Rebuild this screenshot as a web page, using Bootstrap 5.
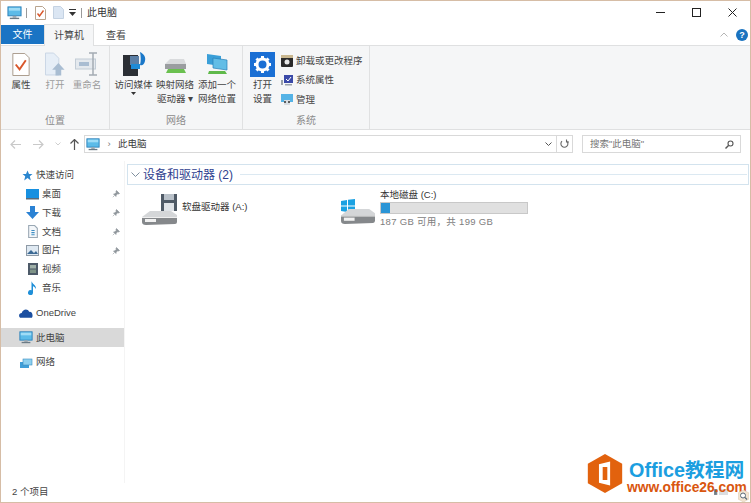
<!DOCTYPE html>
<html lang="zh-CN">
<head>
    <meta charset="UTF-8">
    <meta name="viewport" content="width=device-width, initial-scale=1.0">
    <link href="https://cdn.jsdelivr.net/npm/bootstrap@5.3.3/dist/css/bootstrap.min.css" rel="stylesheet">
    <script src="https://cdn.jsdelivr.net/npm/bootstrap@5.3.3/dist/js/bootstrap.bundle.min.js"></script>
    <title>此电脑</title>
    <style>
        html, body { height: 100%; margin: 0; overflow: hidden; }
        body { font-family: "Liberation Sans", "Noto Sans CJK SC", sans-serif; font-size: 10px; color: #3c3c3c; background: #fff; }
        svg { display: block; flex: none; }

        .win-frame { width: 751px; height: 503px; border: 1px solid #d6bda6; position: relative; background: #fff; }

        /* title bar */
        .title-row { height: 23px; padding-left: 6px; }
        .title-sep { width: 1px; height: 10px; background: #9a9a9a; }
        .sep-a { margin: 0 8px 0 4px; }
        .sep-b { margin: 0 5px 0 5px; }
        .gap-page { margin-left: 7px; }
        .gap-down { margin-left: 5px; }
        .title-text { font-size: 10px; color: #333; }
        .win-btn { width: 36px; justify-content: center; }

        /* tabs */
        .tab-row { height: 21px; }
        .tab-file { width: 43px; height: 19px; background: #1a74c4; color: #fff; font-size: 10px; margin-top: 1px; }
        .tab-item { width: 50px; height: 22px; font-size: 10px; color: #444; margin-bottom: -1px; }
        .tab-view { width: 44px; }
        .tab-on { background: #f5f6f7; border: 1px solid #dfe0e1; border-bottom: 0; position: relative; z-index: 1; }
        .help-dot { width: 12px; height: 12px; border-radius: 50%; background: #1a73c0; color: #fff; font-size: 9px; font-weight: 700; line-height: 12px; text-align: center; margin: 0 2px 0 8px; }

        /* ribbon */
        .ribbon-bar { height: 85px; background: #f5f6f7; border-top: 1px solid #dfe0e1; border-bottom: 1px solid #dfe0e1; }
        .rb-group { border-right: 1px solid #e0e1e2; height: 83px; }
        .grp-place { width: 109px; }
        .grp-net { width: 133px; }
        .grp-sys { width: 127px; }
        .rb-tools { height: 67px; padding-top: 4px; }
        .tools-net { padding-left: 3px; }
        .tools-sys { padding-left: 7px; }
        .rb-label { height: 15px; font-size: 10px; color: #8b8b8b; text-align: center; }
        .rb-ico { height: 28px; display: flex; align-items: center; justify-content: center; }
        .rb-btn { font-size: 9.5px; line-height: 14px; text-align: center; color: #444; width: 42px; }
        .w-prop { width: 40px; }
        .w-open { width: 28px; }
        .w-name { width: 36px; }
        .w-media { width: 41px; }
        .w-set { width: 25px; }
        .rb-dim { color: #9c9c9c; }
        .rb-list { margin-left: 6px; padding-top: 1px; }
        .rb-small { font-size: 9.5px; color: #444; height: 19.5px; gap: 3px; white-space: nowrap; }

        /* address bar */
        .addr-row { height: 31px; padding: 0 8px 3px 9px; }
        .gap-fwd { margin-left: 12px; }
        .gap-hist { margin-left: 11px; }
        .gap-up { margin-left: 9px; }
        .addr-box { width: 473px; height: 18px; border: 1px solid #d9d9d9; font-size: 9.5px; margin-left: 5px; padding-left: 1px; }
        .addr-chev { width: 18px; text-align: center; color: #777; }
        .addr-refresh { width: 16px; height: 18px; border: 1px solid #d9d9d9; border-left: 0; }
        .search-box { width: 159px; height: 18px; border: 1px solid #d9d9d9; color: #777; font-size: 9.5px; margin-left: 9px; padding: 0 6px 0 7px; }

        /* side tree */
        .side-pane { width: 123px; padding-top: 5px; }
        .tree-row { height: 18.8px; font-size: 9.5px; color: #444; white-space: nowrap; gap: 3px; }
        .tree-sub { padding-left: 25px; }
        .tree-top { padding-left: 18px; }
        .tree-gap { margin-top: 6px; }
        .tree-on { background: #d9d9d9; }
        .tree-slot { width: 13px; display: flex; justify-content: center; flex: none; }
        .pin-slot { margin-left: auto; margin-right: 4px; }

        /* content */
        .content-pane { padding: 3px 0 0 2px; border-left: 1px solid #f4f4f4; }
        .group-head { height: 21px; width: 622px; border: 1px solid #d3e3ee; gap: 3px; padding-left: 3px; color: #2f3f8f; font-size: 12px; }
        .group-line { height: 1px; background: #dce9f2; flex: 1; margin: 0 1px 0 4px; }
        .drive-list { padding-top: 3px; }
        .drive-a { width: 214px; padding: 6px 0 0 15px; gap: 5px; }
        .drive-c { gap: 5px; }
        .drive-ico-a { width: 35px; height: 31px; position: relative; }
        .drive-ico-c { width: 34px; height: 25px; margin-top: 11px; position: relative; }
        .drive-a-label { margin-top: 6px; }
        .drive-name { font-size: 9.5px; line-height: 13px; color: #333; white-space: nowrap; }
        .drive-bar { width: 148px; height: 12px; background: #e0e0e0; border: 1px solid #c8c8c8; margin: 1px 0; }
        .drive-used { height: 100%; background: #2b95d6; }
        .drive-free { font-size: 9.5px; line-height: 13px; color: #7d7d7d; letter-spacing: .3px; white-space: nowrap; }

        .status-row { height: 19px; padding: 0 22px 1px 11px; font-size: 9.5px; color: #444; gap: 4px; }

        /* watermark over the window corner */
        .wm-logo { position: absolute; left: 586px; top: 453px; }
        .wm-title { position: absolute; left: 628px; top: 456px; font: 700 19.8px/26px "Liberation Sans", "Noto Sans CJK SC", sans-serif; color: #1b9ee0; white-space: nowrap; }
        .wm-url { position: absolute; left: 626px; top: 478px; font: 700 13.8px/18px "Liberation Sans", sans-serif; color: #d9560f; white-space: nowrap; }
        .wm-zoom { position: absolute; left: 737px; top: 489px; }
    </style>
</head>
<body>

<svg width="0" height="0" class="position-absolute">
    <symbol id="ic-pc" viewBox="0 0 16 14">
        <rect x="1" y="0.5" width="14" height="9.5" fill="#5cbbe8" stroke="#2a7fb8"/>
        <rect x="2" y="1.5" width="12" height="3" fill="#9fdcf6"/>
        <rect x="6" y="10" width="4" height="2" fill="#9aa7b0"/>
        <rect x="3" y="12" width="10" height="1.5" fill="#6b7a85"/>
    </symbol>
    <symbol id="ic-pin" viewBox="0 0 8 8">
        <path d="M4.5 .5 7.5 3.500 6.500 4 5.500 3.800 4.200 5.300 4 6.500 1.500 4 2.800 3.800 4.300 2.500 4 1.500Z M2.500 5.500 .8 7.200" fill="#8e959b" stroke="#8e959b" stroke-width=".6"/>
    </symbol>
    <symbol id="ic-drive" viewBox="0 0 35 15" preserveAspectRatio="none">
        <path d="M0 7 8 1H29L35 5V7Z" fill="#d4d6d8"/>
        <path d="M0 7H35V12Q35 14 33 14L4 15Q0 15 0 12Z" fill="#85888b"/>
        <path d="M0 7H35V8H0Z" fill="#eeeeee"/>
        <rect x="3" y="9" width="11" height="3" fill="#f1f1f1"/>
    </symbol>
</svg>

<div class="win-frame d-flex flex-column">

    <div class="title-row d-flex align-items-center">
        <svg width="15" height="14"><use href="#ic-pc"/></svg>
        <span class="title-sep sep-a"></span>
        <svg width="11" height="14" viewBox="0 0 11 14"><path d="M.5.5H7.500L10.500 3.500V13.500H.5Z" fill="#fff" stroke="#b9a48e"/><path d="M2.500 7.500 4.500 10 8.500 4.500" fill="none" stroke="#d9572b" stroke-width="1.400"/></svg>
        <svg class="gap-page" width="11" height="13" viewBox="0 0 11 13"><path d="M.5.5H7.500L10.500 3.500V12.500H.5Z" fill="#dbe6f3" stroke="#c4d2e2"/></svg>
        <svg class="gap-down" width="7" height="7" viewBox="0 0 7 7"><path d="M0 0H7V1H0ZM0 3H7L3.500 7Z" fill="#333"/></svg>
        <span class="title-sep sep-b"></span>
        <span class="title-text">此电脑</span>
        <div class="ms-auto d-flex h-100 align-items-center">
            <div class="win-btn d-flex"><svg width="9" height="9" viewBox="0 0 9 9"><path d="M0 4.500H9" stroke="#222"/></svg></div>
            <div class="win-btn d-flex"><svg width="9" height="9" viewBox="0 0 9 9"><rect x=".5" y=".5" width="8" height="8" fill="none" stroke="#222"/></svg></div>
            <div class="win-btn d-flex"><svg width="9" height="9" viewBox="0 0 9 9"><path d="M.5.500 8.500 8.500M8.500.500 .5 8.500" stroke="#222"/></svg></div>
        </div>
    </div>

    <div class="tab-row d-flex align-items-start">
        <div class="tab-file d-flex align-items-center justify-content-center">文件</div>
        <div class="tab-item tab-on d-flex align-items-center justify-content-center">计算机</div>
        <div class="tab-item tab-view d-flex align-items-center justify-content-center">查看</div>
        <div class="ms-auto d-flex align-items-center h-100">
            <svg width="8" height="5" viewBox="0 0 8 5"><path d="M.5 4.500 4 1 7.500 4.500" fill="none" stroke="#b5b5b5"/></svg>
            <div class="help-dot">?</div>
        </div>
    </div>

    <div class="ribbon-bar d-flex">
        <!-- 位置 -->
        <div class="rb-group grp-place d-flex flex-column">
            <div class="rb-tools d-flex">
                <div class="rb-btn w-prop">
                    <div class="rb-ico"><svg width="18" height="23" viewBox="0 0 18 24"><path d="M.5.5H13L17.500 5V23.500H.5Z" fill="#fff" stroke="#a89a8a"/><path d="M3.500 12 7.500 17 14 7.500" fill="none" stroke="#d9572b" stroke-width="2"/></svg></div>
                    属性
                </div>
                <div class="rb-btn rb-dim w-open">
                    <div class="rb-ico"><svg width="21" height="24" viewBox="0 0 22 24"><path d="M.5.5H9L14.500 6V23.500H.5Z" fill="#e6eef7" stroke="#c8d5e4"/><path d="M14 11 20.500 18H17V24H11V18H7.500Z" fill="#a9bdd2"/></svg></div>
                    打开
                </div>
                <div class="rb-btn rb-dim w-name">
                    <div class="rb-ico"><svg width="24" height="24" viewBox="0 0 24 24"><rect x=".5" y="7" width="20" height="10" fill="#e4e9ee" stroke="#c2ccd6"/><rect x="4" y="10" width="10" height="4" fill="#a9bdd2"/><path d="M14 1H22M14 23H22M18 1V23" stroke="#a4acb4" stroke-width="1.500" fill="none"/></svg></div>
                    重命名
                </div>
            </div>
            <div class="rb-label">位置</div>
        </div>

        <!-- 网络 -->
        <div class="rb-group grp-net d-flex flex-column">
            <div class="rb-tools tools-net d-flex">
                <div class="rb-btn w-media">
                    <div class="rb-ico"><svg width="26" height="26" viewBox="0 0 26 26"><rect x="2" y="4" width="15" height="21" fill="#2b2f35"/><rect x="9" y="5" width="9" height="9" fill="#5b7fa6"/><rect x="10" y="13" width="9" height="5" fill="#1f8bd6"/><path d="M19 1C23 3 25 6 24 10 23 14 21 15 19 14 20 10 20 6 19 1Z" fill="#1a78c9"/></svg></div>
                    访问媒体
                    <svg class="mx-auto" width="5" height="3" viewBox="0 0 5 3"><path d="M0 0H5L2.500 3Z" fill="#333"/></svg>
                </div>
                <div class="rb-btn">
                    <div class="rb-ico"><svg width="26" height="26" viewBox="0 0 26 26"><path d="M3 13 8 8H22L24 13Z" fill="#d9dbdd"/><path d="M3 13H24V18H3Z" fill="#9a9da0"/><path d="M6 18H22L24 22H4Z" fill="#6ac04f"/></svg></div>
                    映射网络<br>驱动器 ▾
                </div>
                <div class="rb-btn">
                    <div class="rb-ico"><svg width="26" height="26" viewBox="0 0 26 26"><path d="M3 3 17 5V15L3 13Z" fill="#3a9fd8"/><path d="M9 7 23 9V19L9 17Z" fill="#62bde6" stroke="#2a7fb8" stroke-width=".7"/><path d="M5 20H21L23 23H4Z" fill="#5fb94a"/></svg></div>
                    添加一个<br>网络位置
                </div>
            </div>
            <div class="rb-label">网络</div>
        </div>

        <!-- 系统 -->
        <div class="rb-group grp-sys d-flex flex-column">
            <div class="rb-tools tools-sys d-flex">
                <div class="rb-btn w-set">
                    <div class="rb-ico"><svg width="25" height="25" viewBox="0 0 25 25"><rect width="25" height="25" fill="#1a6fd4"/><circle cx="12.500" cy="12.500" r="5.500" fill="none" stroke="#fff" stroke-width="3"/><path d="M12.500 4V7M12.500 18V21M4 12.500H7M18 12.500H21M6.500 6.500 8.500 8.500M16.500 16.500 18.500 18.500M18.500 6.500 16.500 8.500M8.500 16.500 6.500 18.500" stroke="#fff" stroke-width="3"/></svg></div>
                    打开<br>设置
                </div>
                <div class="rb-list">
                    <div class="rb-small d-flex align-items-center">
                        <svg width="12" height="12" viewBox="0 0 12 12"><rect width="12" height="12" rx="1" fill="#2a2a2a"/><rect width="12" height="3" fill="#c9b78f"/><circle cx="6" cy="7" r="2.500" fill="#e8e8e8"/></svg>
                        卸载或更改程序
                    </div>
                    <div class="rb-small d-flex align-items-center">
                        <svg width="12" height="12" viewBox="0 0 12 12"><rect x="3" y="1" width="9" height="8" fill="#3b4aa8"/><path d="M5 5 7 7 10 3" fill="none" stroke="#fff"/><rect y="6" width="2" height="5" fill="#9aa2aa"/><rect x="4" y="10" width="7" height="1.500" fill="#9aa2aa"/></svg>
                        系统属性
                    </div>
                    <div class="rb-small d-flex align-items-center">
                        <svg width="12" height="12" viewBox="0 0 12 12"><rect width="12" height="8" fill="#55b3e6"/><rect x="3" y="6" width="6" height="5" fill="#d8dde2"/><circle cx="4" cy="8" r="1" fill="#333"/><circle cx="8" cy="8" r="1" fill="#333"/></svg>
                        管理
                    </div>
                </div>
            </div>
            <div class="rb-label">系统</div>
        </div>
    </div>

    <div class="addr-row d-flex align-items-center">
        <svg width="11" height="9" viewBox="0 0 11 9"><path d="M5 .5 1 4.500 5 8.500M1 4.500H11" fill="none" stroke="#c9c9c9" stroke-width="1.200"/></svg>
        <svg class="gap-fwd" width="11" height="9" viewBox="0 0 11 9"><path d="M6 .5 10 4.500 6 8.500M10 4.500H0" fill="none" stroke="#c9c9c9" stroke-width="1.200"/></svg>
        <svg class="gap-hist" width="6" height="4" viewBox="0 0 6 4"><path d="M.5.5 3 3 5.500.5" fill="none" stroke="#cfcfcf"/></svg>
        <svg class="gap-up" width="9" height="11" viewBox="0 0 9 11"><path d="M.5 4.500 4.500.5 8.500 4.500M4.500.5V11" fill="none" stroke="#555" stroke-width="1.200"/></svg>
        <div class="addr-box d-flex align-items-center">
            <svg width="14" height="13"><use href="#ic-pc"/></svg>
            <span class="addr-chev">›</span>
            <span>此电脑</span>
            <svg class="ms-auto me-1" width="7" height="4" viewBox="0 0 7 4"><path d="M.5.5 3.500 3.500 6.500.5" fill="none" stroke="#555"/></svg>
        </div>
        <div class="addr-refresh d-flex align-items-center justify-content-center">
            <svg width="9" height="10" viewBox="0 0 9 10"><path d="M6.800 2.200A3.500 3.500 0 1 1 2 2.200M6.500.5V3H9" fill="none" stroke="#666" stroke-width="1.100"/></svg>
        </div>
        <div class="search-box d-flex align-items-center">
            搜索"此电脑"
            <svg class="ms-auto" width="9" height="9" viewBox="0 0 9 9"><circle cx="5.500" cy="3.500" r="2.500" fill="none" stroke="#555" stroke-width="1.100"/><path d="M3.500 5.500 .5 8.500" stroke="#555" stroke-width="1.400"/></svg>
        </div>
    </div>

    <div class="d-flex flex-grow-1 overflow-hidden">
        <div class="side-pane">
            <div class="tree-row tree-top d-flex align-items-center">
                <svg width="14" height="11" viewBox="-3 0 14 11"><path d="M5.500.5 7 4H10.500L7.800 6.300 8.800 10.500 5.500 8 2.200 10.500 3.200 6.300 .5 4H4Z" fill="#2a86cf"/></svg>
                快速访问
            </div>
            <div class="tree-row tree-sub d-flex align-items-center">
                <span class="tree-slot"><svg width="13" height="11" viewBox="0 0 13 11"><rect width="13" height="9" fill="#1790e0"/><rect y="9" width="13" height="1.500" fill="#5a6a78"/></svg></span>
                桌面
                <svg class="pin-slot" width="8" height="8"><use href="#ic-pin"/></svg>
            </div>
            <div class="tree-row tree-sub d-flex align-items-center">
                <span class="tree-slot"><svg width="13" height="13" viewBox="0 0 13 13"><path d="M4 0H9V6H13L6.500 13 0 6H4Z" fill="#2b82d4"/></svg></span>
                下载
                <svg class="pin-slot" width="8" height="8"><use href="#ic-pin"/></svg>
            </div>
            <div class="tree-row tree-sub d-flex align-items-center">
                <span class="tree-slot"><svg width="10" height="13" viewBox="0 0 9 12"><path d="M.5.5H6L8.500 3V11.500H.5Z" fill="#f4f7fa" stroke="#9aa8b4"/><path d="M3 5H6M3 7H6M3 9H6" stroke="#3f8fc4"/></svg></span>
                文档
                <svg class="pin-slot" width="8" height="8"><use href="#ic-pin"/></svg>
            </div>
            <div class="tree-row tree-sub d-flex align-items-center">
                <span class="tree-slot"><svg width="13" height="11" viewBox="0 0 13 11"><rect x=".5" y=".5" width="12" height="10" fill="#dfe9f2" stroke="#8e9aa6"/><path d="M1 9 5 5 8 8 10 6 12 9Z" fill="#3d6a94"/></svg></span>
                图片
                <svg class="pin-slot" width="8" height="8"><use href="#ic-pin"/></svg>
            </div>
            <div class="tree-row tree-sub d-flex align-items-center">
                <span class="tree-slot"><svg width="10" height="12" viewBox="0 0 10 12"><rect width="10" height="12" fill="#4d5a68"/><rect x="2" y="2" width="6" height="3.500" fill="#9fb0a8"/><rect x="2" y="6.500" width="6" height="3.500" fill="#7f9488"/></svg></span>
                视频
            </div>
            <div class="tree-row tree-sub d-flex align-items-center">
                <span class="tree-slot"><svg width="9" height="14" viewBox="0 0 9 14"><path d="M3.500 0C4 3 8.500 4 8 8 7 6 5.500 5.500 5 5V11.500A2.500 2.500 0 1 1 3.500 9.300Z" fill="#1f8fd8"/></svg></span>
                音乐
            </div>
            <div class="tree-row tree-top tree-gap d-flex align-items-center">
                <svg width="14" height="10" viewBox="0 0 13 9"><path d="M1 9C-1 7 .5 4.500 2.500 4.500 3.500 1 8 0 9.500 3.500 12 3 13.500 6.500 12 9Z" fill="#1b4fa0"/></svg>
                OneDrive
            </div>
            <div class="tree-row tree-top tree-on tree-gap d-flex align-items-center">
                <svg width="14" height="13"><use href="#ic-pc"/></svg>
                此电脑
            </div>
            <div class="tree-row tree-top tree-gap d-flex align-items-center">
                <svg width="14" height="12" viewBox="0 0 14 12"><rect x="1" y="5" width="9" height="6" fill="#3f9ed8"/><rect x="4" y="2" width="9" height="6" fill="#8ed0ef" stroke="#3a8cc0" stroke-width=".6"/></svg>
                网络
            </div>
        </div>

        <div class="content-pane flex-grow-1">
            <div class="group-head d-flex align-items-center">
                <svg width="9" height="5" viewBox="0 0 9 5"><path d="M.5.5 4.500 4.500 8.500.5" fill="none" stroke="#7f8f9e"/></svg>
                <span>设备和驱动器 (2)</span>
                <span class="group-line"></span>
            </div>
            <div class="drive-list d-flex">
                <div class="drive-a d-flex align-items-start">
                    <div class="drive-ico-a">
                        <svg class="position-absolute top-0 end-0" width="16" height="17" viewBox="0 0 16 17"><rect width="16" height="17" fill="#4f5a66"/><rect x="3" width="10" height="6" fill="#b9c1c9"/><rect x="3" y="9" width="10" height="8" fill="#dfe3e7"/></svg>
                        <svg class="position-absolute bottom-0 start-0" width="35" height="15"><use href="#ic-drive"/></svg>
                    </div>
                    <span class="drive-name drive-a-label">软盘驱动器 (A:)</span>
                </div>
                <div class="drive-c d-flex align-items-start">
                    <div class="drive-ico-c">
                        <svg class="position-absolute top-0 start-0" width="14" height="14" viewBox="0 0 14 14"><path d="M0 2 6 1V6.500H0ZM7 .8 14 0V6.500H7ZM0 7.500H6V13L0 12ZM7 7.500H14V14L7 13.200Z" fill="#1ba1e2"/></svg>
                        <svg class="position-absolute bottom-0 start-0" width="34" height="16"><use href="#ic-drive"/></svg>
                    </div>
                    <div>
                        <div class="drive-name">本地磁盘 (C:)</div>
                        <div class="drive-bar"><div class="drive-used" style="width:6%"></div></div>
                        <div class="drive-free">187 GB 可用，共 199 GB</div>
                    </div>
                </div>
            </div>
        </div>
    </div>

    <div class="status-row d-flex align-items-center">
        2 个项目
        <svg class="ms-auto" width="14" height="6" viewBox="0 0 14 6"><path d="M0 0H3V6H0ZM5 1H14M5 3H14M5 5H14" fill="#6f7a85" stroke="#9aa2aa" stroke-width=".7"/></svg>
    </div>

    <svg class="wm-logo" width="36" height="39" viewBox="0 0 37 42"><path d="M18.500 0 37 10.500V31.500L18.500 42 0 31.500V10.500Z" fill="#e2620e"/><path d="M12 11 24 8V34L12 31Z" fill="#fff"/><path d="M16 14H21V28H16Z" fill="#e2620e"/></svg>
    <div class="wm-title">Office教程网</div>
    <div class="wm-url">www.office26.com</div>
    <svg class="wm-zoom" width="11" height="12" viewBox="0 0 11 12"><path d="M5.500 0 11 3V9L5.500 12 0 9V3Z" fill="#f2e4d2" stroke="#d8c4a8" stroke-width=".5"/><circle cx="5" cy="5.500" r="2.500" fill="#fff" stroke="#5a6a78"/><path d="M7 7.500 9 9.500" stroke="#5a6a78" stroke-width="1.200"/></svg>
</div>

</body>
</html>
